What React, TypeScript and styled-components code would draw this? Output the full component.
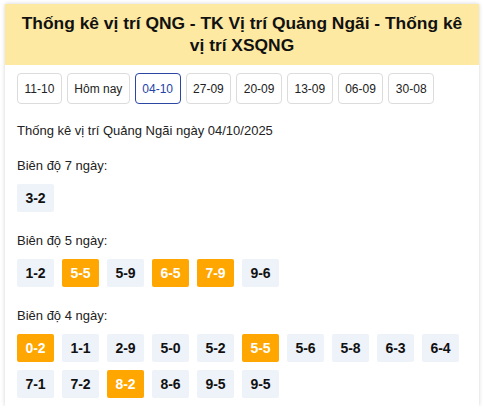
import React from "react";
import styled, { createGlobalStyle } from "styled-components";

const Global = createGlobalStyle`
  html, body { margin: 0; padding: 0; background: #fff; }
  body { font-family: "Liberation Sans", Arial, sans-serif; color: #222; }
`;

const Card = styled.div`
  margin: 4px 5px 0 5px;
  width: 474px;
  background: #fff;
  box-shadow: 0 0 4px rgba(0, 0, 0, 0.18);
`;

const Header = styled.h1`
  margin: 0;
  background: #fde9a1;
  padding: 8px 14px 9px;
  font-size: 17.4px;
  line-height: 22px;
  font-weight: 700;
  text-align: center;
  color: #111;
`;

const Body = styled.div`
  padding: 8px 12px 8px 12px;
`;

const DateBar = styled.div`
  display: flex;
  gap: 5px;
`;

const DateBtn = styled.div<{ $active?: boolean }>`
  height: 31px;
  box-sizing: border-box;
  padding: 0 6.5px;
  display: flex;
  align-items: center;
  justify-content: center;
  white-space: nowrap;
  font-size: 12px;
  border: 1px solid ${(p) => (p.$active ? "#2b46a3" : "#dcdcdc")};
  border-radius: 4px;
  color: ${(p) => (p.$active ? "#2443a6" : "#222")};
  background: #fff;
`;

const Caption = styled.p`
  margin: 19px 0 0 0;
  font-size: 13px;
  line-height: 16px;
  color: #222;
`;

const Section = styled.div`
  margin-top: 21px;
  &:first-of-type {
    margin-top: 19px;
  }
`;

const Label = styled.div`
  font-size: 13px;
  line-height: 16px;
  color: #222;
`;

const Chips = styled.div`
  margin-top: 10px;
  display: flex;
  flex-wrap: wrap;
  gap: 8px;
  width: 460px;
`;

const Chip = styled.div<{ $hot?: boolean }>`
  width: 37px;
  height: 28px;
  display: flex;
  align-items: center;
  justify-content: center;
  border-radius: 2px;
  font-size: 14px;
  font-weight: 700;
  background: ${(p) => (p.$hot ? "#ffa600" : "#eef2f9")};
  color: ${(p) => (p.$hot ? "#fff" : "#111")};
`;

const dates = ["11-10", "Hôm nay", "04-10", "27-09", "20-09", "13-09", "06-09", "30-08"];

type C = [string, boolean];
const groups: { label: string; chips: C[] }[] = [
  { label: "Biên độ 7 ngày:", chips: [["3-2", false]] },
  {
    label: "Biên độ 5 ngày:",
    chips: [
      ["1-2", false],
      ["5-5", true],
      ["5-9", false],
      ["6-5", true],
      ["7-9", true],
      ["9-6", false],
    ],
  },
  {
    label: "Biên độ 4 ngày:",
    chips: [
      ["0-2", true],
      ["1-1", false],
      ["2-9", false],
      ["5-0", false],
      ["5-2", false],
      ["5-5", true],
      ["5-6", false],
      ["5-8", false],
      ["6-3", false],
      ["6-4", false],
      ["7-1", false],
      ["7-2", false],
      ["8-2", true],
      ["8-6", false],
      ["9-5", false],
      ["9-5", false],
    ],
  },
];

export default function App() {
  return (
    <>
      <Global />
      <Card>
        <Header>
          Thống kê vị trí QNG - TK Vị trí Quảng Ngãi - Thống kê vị trí XSQNG
        </Header>
        <Body>
          <DateBar>
            {dates.map((d) => (
              <DateBtn key={d} $active={d === "04-10"}>
                {d}
              </DateBtn>
            ))}
          </DateBar>
          <Caption>Thống kê vị trí Quảng Ngãi ngày 04/10/2025</Caption>
          <div>
            {groups.map((g) => (
              <Section key={g.label}>
                <Label>{g.label}</Label>
                <Chips>
                  {g.chips.map(([t, hot], i) => (
                    <Chip key={i} $hot={hot}>
                      {t}
                    </Chip>
                  ))}
                </Chips>
              </Section>
            ))}
          </div>
        </Body>
      </Card>
    </>
  );
}
